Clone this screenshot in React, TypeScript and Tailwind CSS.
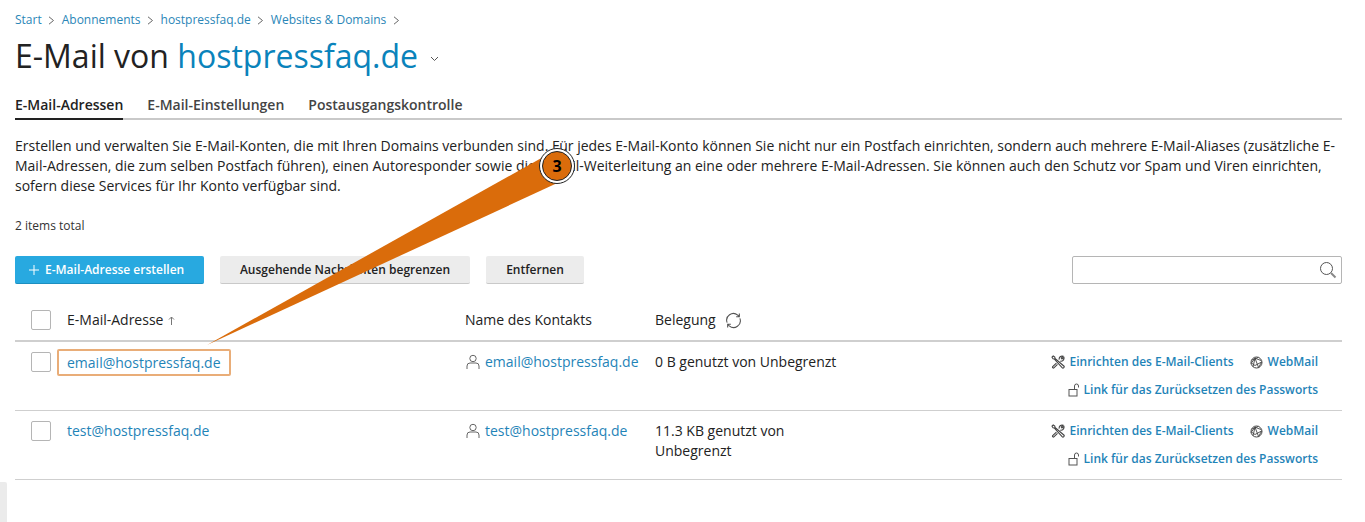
import React from "react";

const Chevron = () => (
  <svg width="7" height="9" viewBox="0 0 7 9" fill="none" stroke="#666" strokeWidth="1"><path d="M1 .8 5.5 4.5 1 8.2" /></svg>
);
const Tools = () => (
  <svg width="14" height="14" viewBox="0 0 14 14" fill="none" stroke="#444" strokeWidth="1.1"><path d="M1 2.2 2.2 1l1.6 1 .2 1.4L12.8 11a1.2 1.2 0 0 1-1.7 1.7L3.2 4 2 3.8z" /><path d="M8.2 4.6a3 3 0 0 1 3.9-3.4L10.3 3l.7 1 1.9-1.6a3 3 0 0 1-3.6 3.7M5.4 8.2 1.7 11.6a.9.9 0 0 0 1.2 1.3l3.6-3.6" /></svg>
);
const Globe = () => (
  <svg width="13" height="13" viewBox="0 0 13 13" fill="none" stroke="#444" strokeWidth="1"><circle cx="6.5" cy="6.5" r="5.5" /><path d="M1.6 4.2 8.4 1.4M1 7.5 5 2.2l6.2 2.4M3 10.8l2-8.6 3.6 9.4M8.6 11.6 11.6 6 5 9.5 1.4 7" strokeWidth=".9" /></svg>
);
const Lock = () => (
  <svg width="13" height="14" viewBox="0 0 13 14" fill="none" stroke="#555" strokeWidth="1"><rect x="1" y="6.5" width="8" height="6.5" /><path d="M6.5 6.5V3a2 2 0 0 1 4 0v1.5" /></svg>
);
const User = () => (
  <svg width="14" height="16" viewBox="0 0 14 16" fill="none" stroke="#666" strokeWidth="1"><circle cx="7" cy="4.5" r="3.2" /><path d="M1 15v-3a3 3 0 0 1 3-3h6a3 3 0 0 1 3 3v3" /></svg>
);
const Box = () => <span className="block w-5 h-5 border border-[#b5b5b5] rounded-[2px] bg-white" />;

const link = "text-[#1f84b8]";

function Row({ email, usage, highlight }: { email: string; usage: React.ReactNode; highlight?: boolean }) {
  return (
    <div className="grid grid-cols-[52px_398px_190px_1fr] h-[69px] border-b border-[#cfcfcf] text-sm leading-5">
      <div className="pl-4 pt-[10px]"><Box /></div>
      <div className="pt-[10px]">
        {highlight ? (
          <span className={`inline-block -ml-[10px] -mt-[3px] px-2 h-[27px] leading-[23px] border-2 border-[#e9ad78] rounded-[2px] ${link}`}>{email}</span>
        ) : (
          <span className={link}>{email}</span>
        )}
      </div>
      <div className={`pt-[10px] flex items-start gap-[5px] ${link}`}>
        <span className="pt-[2px] ml-px"><User /></span>
        <span>{email}</span>
      </div>
      <div className="grid grid-cols-[1fr_auto] pr-6">
        <div className="pt-[10px] text-[#222] w-[185px]">{usage}</div>
        <div className="pt-[11px] flex flex-col items-end text-xs font-semibold leading-[18px]">
          <div className="flex items-center">
            <Tools /><span className={`ml-1 ${link}`}>Einrichten des E-Mail-Clients</span>
            <span className="ml-4"><Globe /></span><span className={`ml-[5px] ${link}`}>WebMail</span>
          </div>
          <div className="flex items-center mt-[10px]">
            <Lock /><span className={`ml-[3px] ${link}`}>Link für das Zurücksetzen des Passworts</span>
          </div>
        </div>
      </div>
    </div>
  );
}

export default function App() {
  return (
    <div className="relative h-[522px] overflow-hidden bg-white pl-[15px] pr-[23px] font-['Open_Sans',sans-serif] text-[#222]">
      <div className="pt-[9px] h-[31px] flex items-center gap-[6.5px] text-xs leading-4 text-[#2a86b7]">
        <span>Start</span><Chevron /><span>Abonnements</span><Chevron /><span>hostpressfaq.de</span><Chevron /><span>Websites &amp; Domains</span><Chevron />
      </div>
      <div className="mt-1 h-[42px] flex items-center text-[32px] leading-[42px]">
        <span>E-Mail von&nbsp;</span><span className="text-[#0a83bb]">hostpressfaq.de</span>
        <svg className="ml-[12px] mt-[5px]" width="9" height="6" viewBox="0 0 9 6" fill="none" stroke="#555" strokeWidth="1"><path d="M1 1l3.5 3.5L8 1" /></svg>
      </div>
      <div className="mt-[11px] flex gap-6 h-[32px] border-b-2 border-[#c9c9c9] text-sm leading-5 font-semibold text-[#444]">
        <span className="h-[32px] pt-[7px] border-b-2 border-[#222] text-[#222]">E-Mail-Adressen</span>
        <span className="pt-[7px]">E-Mail-Einstellungen</span>
        <span className="pt-[7px]">Postausgangskontrolle</span>
      </div>
      <p className="mt-4 text-sm leading-5 text-[#222] w-[1327px]">
        Erstellen und verwalten Sie E-Mail-Konten, die mit Ihren Domains verbunden sind. Für jedes E-Mail-Konto können Sie nicht nur ein Postfach einrichten, sondern auch mehrere E-Mail-Aliases (zusätzliche E-Mail-Adressen, die zum selben Postfach führen), einen Autoresponder sowie die E-Mail-Weiterleitung an eine oder mehrere E-Mail-Adressen. Sie können auch den Schutz vor Spam und Viren einrichten, sofern diese Services für Ihr Konto verfügbar sind.
      </p>
      <div className="mt-[22px] text-xs leading-4 text-[#333]">2 items total</div>
      <div className="mt-[22px] flex items-center h-7 text-xs font-semibold">
        <button className="h-7 w-[189px] flex items-center pl-[14px] gap-[6px] rounded-[2px] bg-[#28a9e0] border-b border-[#1c8fc0] text-white">
          <svg width="10" height="10" viewBox="0 0 10 10" stroke="#fff" strokeWidth="1"><path d="M5 0v10M0 5h10" /></svg>
          E-Mail-Adresse erstellen
        </button>
        <button className="ml-4 h-7 w-[250px] rounded-[2px] bg-[#ececec] border-b border-[#c9c9c9] text-[#222]">Ausgehende Nachrichten begrenzen</button>
        <button className="ml-4 h-7 w-[98px] rounded-[2px] bg-[#ececec] border-b border-[#c9c9c9] text-[#222]">Entfernen</button>
        <div className="ml-auto w-[270px] h-7 border border-[#b5b5b5] rounded-[2px] flex items-center justify-end pr-1">
          <svg width="18" height="18" viewBox="0 0 18 18" fill="none" stroke="#555" strokeWidth="1"><circle cx="7.5" cy="7.5" r="6" /><path d="M12 12l4.5 4.5" strokeWidth="2" stroke="#888" /></svg>
        </div>
      </div>
      <div className="mt-[14px] grid grid-cols-[52px_398px_190px_1fr] h-[44px] border-b-2 border-[#cfcfcf] text-sm leading-5 text-[#222]">
        <div className="pl-4 pt-3"><Box /></div>
        <div className="pt-[12px] flex items-start gap-[5px]">
          <span>E-Mail-Adresse</span>
          <svg className="mt-[6px]" width="7" height="9" viewBox="0 0 7 9" fill="none" stroke="#777" strokeWidth="1"><path d="M3.5 9V1M1 3.5 3.5 1 6 3.5" /></svg>
        </div>
        <div className="pt-[12px]">Name des Kontakts</div>
        <div className="pt-[12px] flex items-start gap-[9px]">
          <span>Belegung</span>
          <svg className="mt-[2px]" width="17" height="17" viewBox="0 0 16 16" fill="none" stroke="#555" strokeWidth="1"><path d="M2 10A6.3 6.3 0 0 1 12 3l1.5 1.5M14 6a6.3 6.3 0 0 1-10 7l-1.5-1.5M13.5 1.5v3h-3M2.5 14.5v-3h3" /></svg>
        </div>
      </div>
      <Row email="email@hostpressfaq.de" usage="0 B genutzt von Unbegrenzt" highlight />
      <Row email="test@hostpressfaq.de" usage="11.3 KB genutzt von Unbegrenzt" />

      <svg className="absolute left-0 top-0 pointer-events-none" width="1365" height="522" viewBox="0 0 1365 522">
        <polygon points="207,345 545,156 566,179" fill="#da6c0b" />
      </svg>
      <div className="absolute left-[539px] top-[148px] w-9 h-9 rounded-full bg-white border border-[#222] flex items-center justify-center">
        <div className="w-[30px] h-[30px] rounded-full bg-[#da6c0b] border border-[#222] flex items-center justify-center text-base font-bold text-black leading-none">3</div>
      </div>
      <div className="absolute left-0 top-[482px] w-[7px] h-10 bg-[#ebebeb] rounded-tr-[2px]" />
    </div>
  );
}
